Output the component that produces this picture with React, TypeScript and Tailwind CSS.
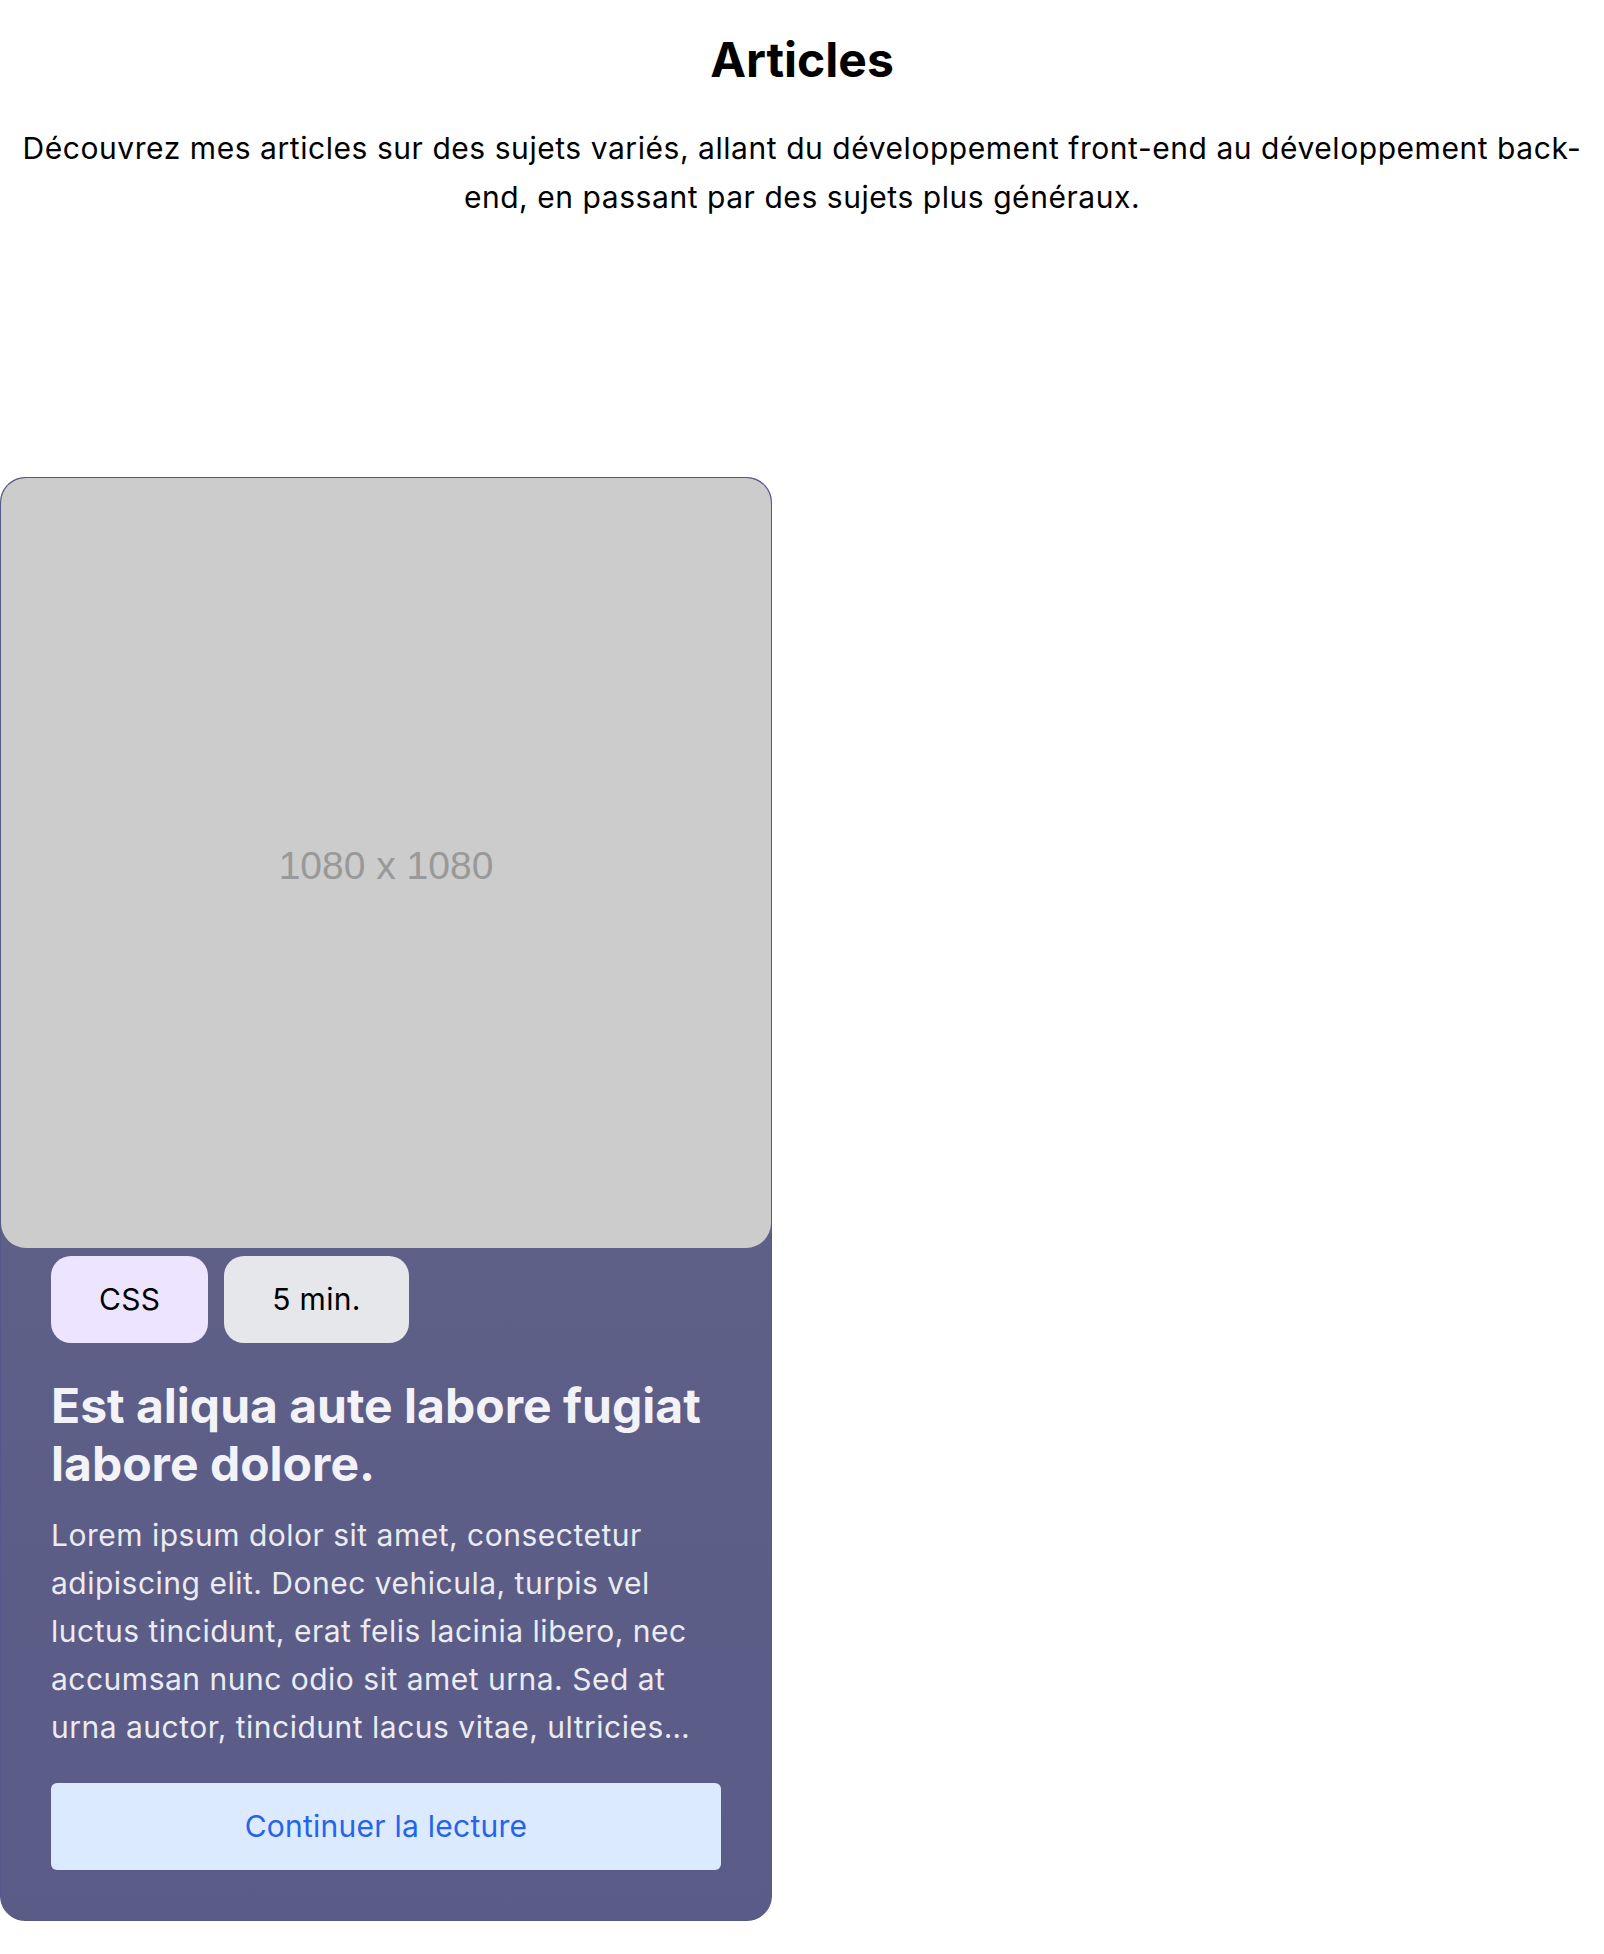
const tags = [
  { label: 'CSS', className: 'bg-[#ede5ff]' },
  { label: '5 min.', className: 'bg-[#e5e7eb]' },
];

function ArticleCard() {
  return (
    <article className="flex flex-col overflow-hidden rounded-[25px] border border-[#56588a] bg-gradient-to-b from-[#636588] to-[#5a5b87]">
      {/* Placeholder image */}
      <div className="flex aspect-square w-full items-center justify-center rounded-[25px] bg-[#cccccc] pt-[7px]">
        <span className="font-['Liberation_Sans',Arial,sans-serif] text-[39px] text-[#999999]">1080 x 1080</span>
      </div>

      <div className="flex flex-col px-[50px] pt-2 pb-[50px]">
        <div className="flex gap-4">
          {tags.map((tag) => (
            <span
              key={tag.label}
              className={`flex h-[87px] items-center rounded-[20px] px-[48px] text-[30px] tracking-[0.3px] text-black ${tag.className}`}
            >
              {tag.label}
            </span>
          ))}
        </div>

        <h2 className="mt-[34px] text-[48px] leading-[58px] font-bold text-[#f3f2f7]">
          Est aliqua aute labore fugiat labore dolore.
        </h2>

        <p className="mt-[18px] text-[30px] leading-[48px] tracking-[0.5px] text-[#ebebf2]">
          Lorem ipsum dolor sit amet, consectetur adipiscing elit. Donec vehicula, turpis vel luctus tincidunt, erat
          felis lacinia libero, nec accumsan nunc odio sit amet urna. Sed at urna auctor, tincidunt lacus vitae,
          ultricies…
        </p>

        <button className="mt-8 flex h-[87px] w-full items-center justify-center rounded-md bg-[#dbeafe] text-[30px] tracking-[0.25px] text-[#2563eb]">
          Continuer la lecture
        </button>
      </div>
    </article>
  );
}

export default function App() {
  return (
    <div className="min-h-screen bg-white font-['Inter',sans-serif] text-black">
      <header className="px-5 pt-[26px] text-center">
        <h1 className="text-[48px] leading-[68px] font-bold">Articles</h1>
        <p className="mt-[30px] text-[30px] leading-[49px] tracking-[0.55px]">
          Découvrez mes articles sur des sujets variés, allant du développement front-end au développement back-end, en
          passant par des sujets plus généraux.
        </p>
      </header>

      <section className="mt-[255px] grid grid-cols-2 gap-[60px]">
        <ArticleCard />
      </section>
    </div>
  );
}
